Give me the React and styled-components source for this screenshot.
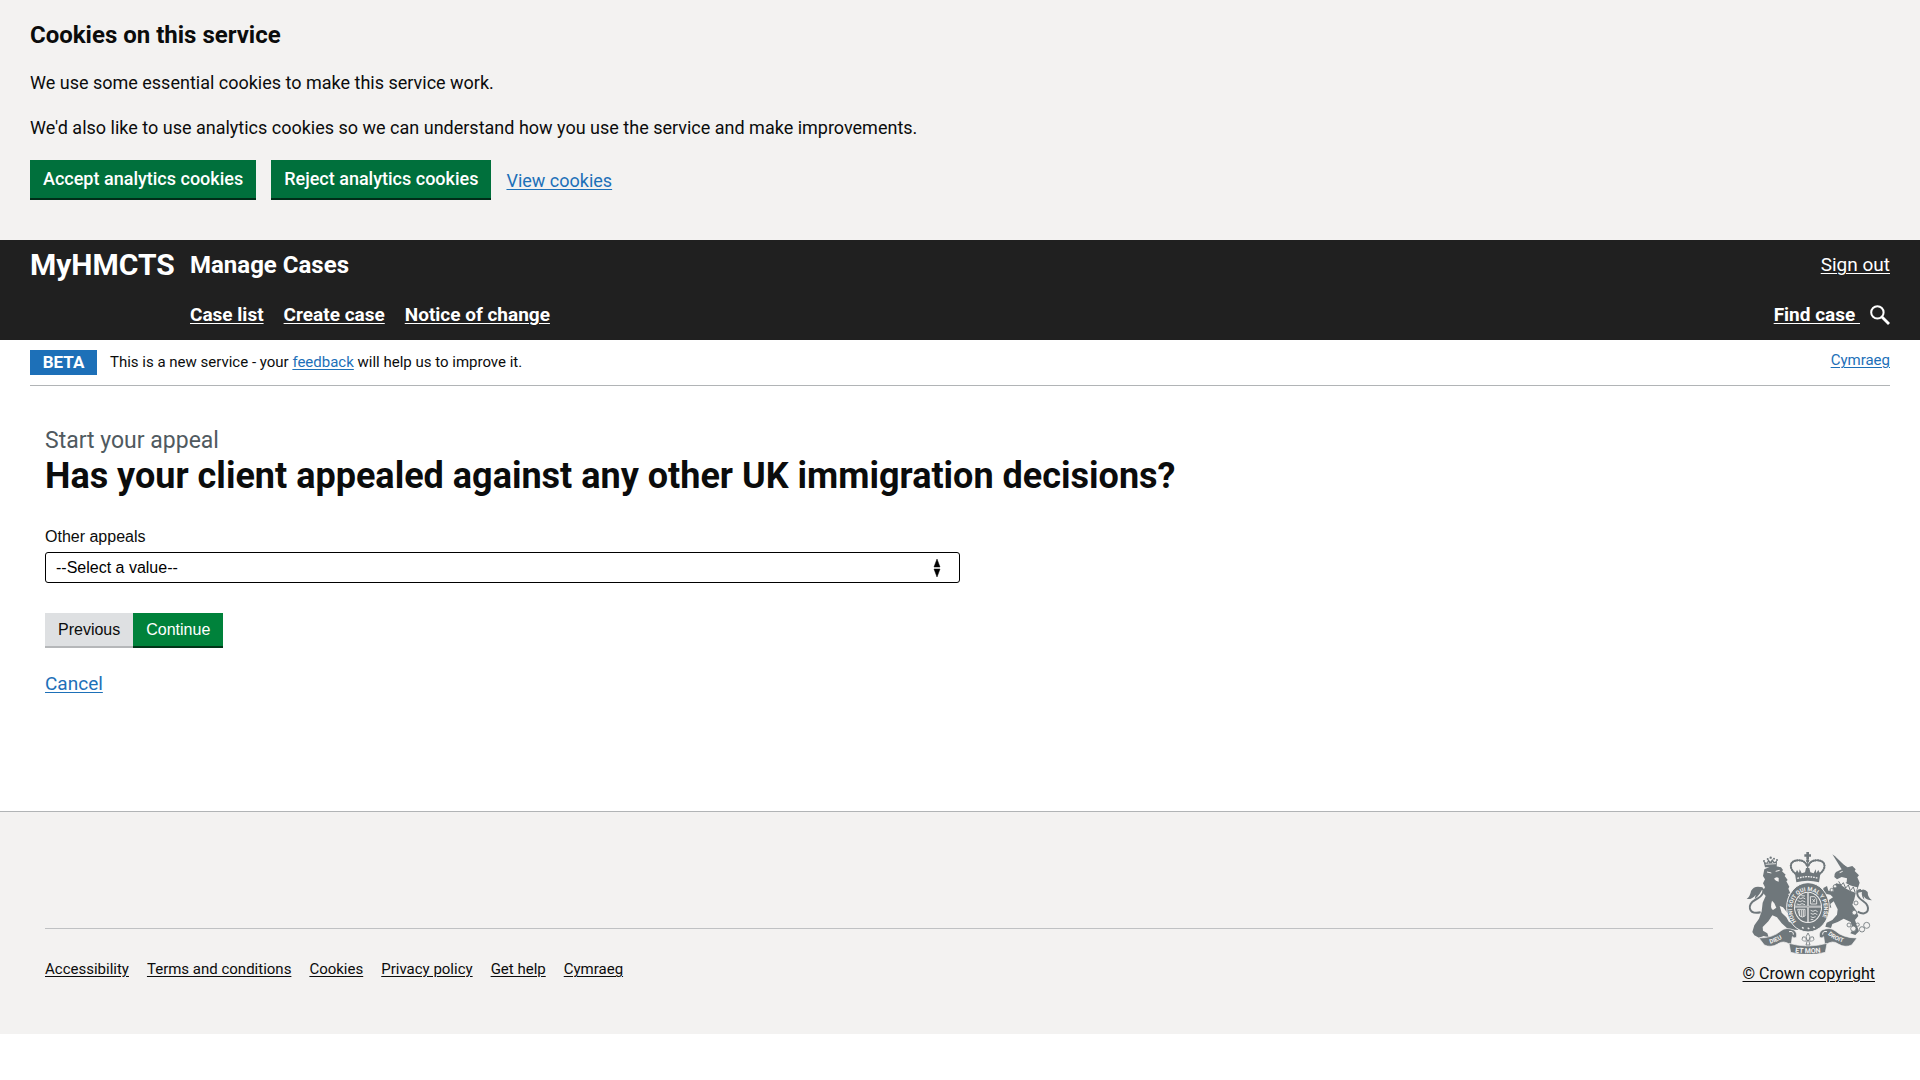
import React from "react";
import styled, { createGlobalStyle } from "styled-components";

const serviceFont = `Roboto, "Liberation Sans", sans-serif`;
const formFont = `"Liberation Sans", Arial, sans-serif`;

const colour = {
  text: "#0b0c0c",
  link: "#1d70b8",
  grey: "#f3f2f1",
  border: "#b1b4b6",
  header: "#202020",
  green: "#00703c",
  white: "#ffffff",
};

const GlobalStyle = createGlobalStyle`
  *, *::before, *::after { box-sizing: border-box; }
  body {
    margin: 0;
    background: ${colour.white};
    color: ${colour.text};
    font-family: ${serviceFont};
    font-size: 18px;
    line-height: 25px;
  }
  h1, h2, p, ul { margin: 0; padding: 0; }
  ul { list-style: none; }
`;

const Link = styled.a`
  color: ${(p) => p.$colour || colour.link};
  font-size: ${(p) => p.$size || 18}px;
  font-weight: ${(p) => (p.$bold ? 700 : 400)};
  text-decoration: underline;
  text-decoration-thickness: 1px;
  text-underline-offset: 2px;
`;

const CookieBanner = styled.section`
  display: flex;
  flex-direction: column;
  gap: 20px;
  padding: 20px 30px 40px;
  background: ${colour.grey};
`;

const BannerTitle = styled.h2`
  font-size: 24px;
  line-height: 30px;
  font-weight: 700;
`;

const BannerActions = styled.div`
  display: flex;
  align-items: center;
  gap: 15px;
`;

const BannerButton = styled.button`
  height: 40px;
  padding: 0 13px;
  border: 0;
  border-bottom: 2px solid #002d18;
  background: ${colour.green};
  color: ${colour.white};
  font: 500 18px/38px ${serviceFont};
`;

const Header = styled.header`
  display: grid;
  grid-template-columns: 160px 1fr auto;
  grid-template-rows: 50px 50px;
  align-items: center;
  padding: 0 30px;
  background: ${colour.header};
  color: ${colour.white};
`;

const Logo = styled.a`
  color: inherit;
  font-size: 30px;
  line-height: 24px;
  font-weight: 700;
  text-decoration: none;
`;

const ServiceName = styled.a`
  color: inherit;
  font-size: 24px;
  font-weight: 700;
  text-decoration: none;
`;

const MainNav = styled.nav`
  grid-column: 2;
  display: flex;
  gap: 20px;
  line-height: 24px;
`;

const HeaderEnd = styled.div`
  display: flex;
  align-items: center;
  justify-content: flex-end;
  gap: 10px;
  line-height: 24px;
`;

const PhaseBanner = styled.div`
  display: flex;
  align-items: flex-start;
  margin: 0 30px;
  padding: 10px 0;
  border-bottom: 1px solid ${colour.border};
`;

const PhaseTag = styled.strong`
  min-width: 67px;
  margin-right: 13px;
  background: ${colour.link};
  color: ${colour.white};
  font-size: 17px;
  font-weight: 700;
  text-align: center;
`;

const PhaseText = styled.p`
  flex: 1;
  font-size: 15px;
`;

const LanguageLink = styled(Link)`
  line-height: 20px;
`;

const Main = styled.main`
  padding: 40px 45px 115px;
`;

const Caption = styled.span`
  display: block;
  color: #505a5f;
  font-size: 23px;
  line-height: 30px;
  font-weight: 400;
`;

const PageTitle = styled.h1`
  font-size: 36px;
  line-height: 40px;
  font-weight: 700;
`;

const Form = styled.form`
  display: flex;
  flex-direction: column;
  align-items: flex-start;
  padding-top: 30px;
  font-family: ${formFont};
  font-size: 16px;
  line-height: 22px;
`;

const SelectFrame = styled.div`
  display: grid;
  align-items: center;
  width: 50%;
  margin: 4px 0 30px;

  & > * { grid-area: 1 / 1; }
`;

const Select = styled.select`
  width: 100%;
  height: 31px;
  padding: 0 10px;
  appearance: none;
  border: 1px solid #000;
  border-radius: 3px;
  background: ${colour.white};
  color: #000;
  font: 400 16px/20px ${formFont};
`;

const SelectArrows = styled.svg`
  justify-self: end;
  margin-right: 19px;
  pointer-events: none;
`;

const ButtonRow = styled.div`
  display: flex;
  margin-bottom: 23px;
`;

const FormButton = styled.button`
  height: 35px;
  padding: 0 13px;
  border: 0;
  border-bottom: 2px solid ${(p) => (p.$primary ? "#003618" : "#b5b7b9")};
  background: ${(p) => (p.$primary ? "#00823b" : "#dee0e2")};
  color: ${(p) => (p.$primary ? colour.white : colour.text)};
  font: 400 16px/33px ${formFont};
`;

const CancelLink = styled(Link)`
  font-family: ${serviceFont};
  line-height: 25px;
`;

const Footer = styled.footer`
  display: flex;
  gap: 30px;
  padding: 40px 45px 48px;
  border-top: 1px solid ${colour.border};
  background: ${colour.grey};
`;

const FooterMeta = styled.div`
  flex: 1;
  padding-top: 76px;
`;

const FooterLinks = styled.ul`
  display: flex;
  gap: 18px;
  padding-top: 26px;
  border-top: 1px solid #bfc1c3;
`;

const Crown = styled.a`
  display: flex;
  flex-direction: column;
  align-items: center;
  gap: 7px;
  color: ${colour.text};
  font-size: 16px;
  text-decoration: underline;
  text-decoration-thickness: 1px;
  text-underline-offset: 2px;
`;

function SearchIcon() {
  return (
    <svg width="20" height="20" viewBox="0 0 20 20" fill="none" stroke="#fff" aria-hidden="true">
      <circle cx="7.4" cy="7.4" r="6.2" strokeWidth="2" />
      <path d="M12 12l7 7" strokeWidth="2.8" />
    </svg>
  );
}

function CoatOfArms() {
  const ink = "#6f777b";
  const paper = colour.grey;
  return (
    <svg width="126" height="102" viewBox="80 66 376 306" fill={ink} fontFamily="Roboto, sans-serif" fontWeight="700" aria-hidden="true">
      {/* lion */}
      <path d="M136 112 L132 95 L141 98 L146 88 L152 95 L158 87 L164 96 L172 92 L171 112 Z" />
      <circle cx="133" cy="93" r="3" />
      <circle cx="144" cy="87" r="3" />
      <circle cx="153" cy="83" r="3.5" />
      <circle cx="163" cy="86" r="3" />
      <circle cx="172" cy="90" r="3" />
      <path d="M138 103 L169 101 M144 96 L148 100 M157 96 L161 99" stroke={paper} strokeWidth="2.5" />
      <path d="M134 118 Q158 104 184 112 L190 120 L187 124 L198 134 L195 138 L204 150 L200 154 L209 170 L206 176 L212 190 L205 192 L216 204 L216 236 L209 240 L220 262 L203 248 L190 232 L180 228 L186 248 L200 262 L208 276 L228 281 L239 291 L236 300 L206 298 L186 280 L172 262 L158 256 L146 274 L129 291 L130 302 L143 310 L147 322 L132 318 L118 323 L104 316 L98 306 L104 286 L118 266 L126 244 L129 218 L138 198 L128 186 L136 172 L130 160 L136 148 L130 138 Z" />
      <path d="M142 126 L155 129 M168 124 L180 121" stroke={paper} strokeWidth="3" />
      <path d="M163 146 Q170 138 177 144 L177 155 L169 152 Z" fill={paper} />
      <path d="M157 212 Q150 234 160 240 L170 233 L164 220 Z" fill={paper} />
      <path d="M123 247 C84 255 82 222 106 210 C134 196 138 176 122 174" fill="none" stroke={ink} strokeWidth="6" />
      <path d="M130 173 Q104 164 94 183 Q92 198 81 207 Q98 209 108 194 L105 207 Q120 196 130 173 Z" />

      {/* unicorn */}
      <path d="M338 73 L346 79 L379 110 L367 119 Z" />
      <path d="M345 132 L349 126 L366 118 L374 106 L384 112 L398 108 L408 118 L405 123 L418 136 L413 142 L420 158 L414 176 L408 190 L404 208 L398 224 L410 242 L416 258 L406 270 L412 288 L418 304 L407 315 L392 310 L400 298 L393 276 L372 266 L354 276 L338 282 L334 294 L317 290 L321 278 L338 270 L352 254 L354 238 L342 214 L332 222 L335 233 L322 231 L320 215 L340 202 L332 194 L311 190 L311 174 L322 168 L326 182 L342 184 L339 170 L350 160 L367 164 L381 157 L382 145 L366 141 L352 148 L344 141 Z" />
      <path d="M360 128 L369 124" stroke={paper} strokeWidth="3" />
      <path d="M357 158 Q382 182 408 188 L413 172 Q386 168 362 148 Z" fill={paper} />
      <path d="M357 154 L364 166 L371 158 L378 174 L386 165 L392 182 L401 171 L406 186" fill="none" stroke={ink} strokeWidth="3" />
      <g fill={paper} stroke={ink} strokeWidth="2.5">
        <circle cx="346" cy="169" r="5" />
        <circle cx="336" cy="180" r="5" />
        <circle cx="409" cy="219" r="6" />
        <circle cx="404" cy="248" r="7" />
        <circle cx="388" cy="285" r="6" />
        <circle cx="401" cy="296" r="8" />
        <circle cx="414" cy="284" r="5" />
        <circle cx="427" cy="298" r="8" />
        <circle cx="441" cy="286" r="9" />
      </g>
      <path d="M414 245 C446 263 457 230 430 213 C408 199 408 180 424 180" fill="none" stroke={ink} strokeWidth="6" />
      <path d="M412 188 Q432 170 444 186 Q444 202 457 211 Q439 211 432 198 L434 210 Q424 200 427 186 Z" />

      {/* royal crown */}
      <path d="M260 66 h8 v7 h6 v7 h-6 v8 h-8 v-8 h-6 v-7 h6 z" />
      <circle cx="264" cy="92" r="5" />
      <path d="M232 134 C206 118 208 92 234 91 C252 90 260 100 262 108 M296 134 C322 118 320 92 294 91 C276 90 268 100 266 108" fill="none" stroke={ink} strokeWidth="6.5" strokeLinecap="round" strokeDasharray="1 5.8" />
      <path d="M232 134 C206 118 208 92 234 91 C252 90 260 100 262 108 M296 134 C322 118 320 92 294 91 C276 90 268 100 266 108 M264 96 V134" fill="none" stroke={ink} strokeWidth="3.5" />
      <path d="M226 132 L232 120 L238 129 L240 118 L246 130 L256 127 L259 114 L269 114 L272 127 L282 130 L288 118 L290 129 L296 120 L302 132 L298 157 Q264 148 230 157 Z" />
      <path d="M233 145 Q264 135 295 145" fill="none" stroke={paper} strokeWidth="4" strokeDasharray="5 3" />

      {/* garter and quartered shield */}
      <ellipse cx="265" cy="232" rx="64" ry="74" stroke={paper} strokeWidth="3" />
      <path id="garter" fill="none" d="M231 275 A48 54 0 1 1 299 275" />
      <text fontSize="17" fill={paper}>
        <textPath href="#garter" startOffset="1">HONI SOIT QUI MAL Y PENSE</textPath>
      </text>
      <path d="M247 292 l5 3 M264 293 l5 4 M281 290 l4 4" stroke={paper} strokeWidth="4" />
      <ellipse cx="265" cy="232" rx="42" ry="47" fill={paper} />
      <ellipse cx="265" cy="232" rx="39" ry="44" />
      <path d="M265 186 V278 M224 230 H306" stroke={paper} strokeWidth="5" />
      <path d="M265 187 V277 M225 230 H305" stroke={ink} strokeWidth="1.5" />
      <g fill="none" stroke={paper} strokeWidth="2.5">
        <path d="M237 203 l6 3 l7 -3 l7 4 M234 212 l8 3 l6 -3 l9 4 M231 222 l9 2 l7 -3 l9 3 M245 197 l11 1" />
        <path d="M272 200 h13 l6 8 v14 h-18 z M278 208 l8 7 M286 207 l-7 10" />
        <path d="M234 238 h22 v20 q-8 6 -16 0 z M240 240 v18 M246 240 v20 M251 240 v19" />
        <path d="M273 241 l7 3 l7 -3 l7 4 M273 250 l7 3 l6 -3 l7 4 M273 260 l7 3 l8 -3 M273 268 l8 1" />
      </g>

      {/* motto scroll */}
      <g stroke={paper} strokeWidth="2">
        <path d="M118 324 Q160 324 184 302 Q200 290 222 300 Q234 307 230 322 Q224 326 218 320 L214 346 Q192 328 174 342 Q154 354 134 345 Z" />
        <path d="M412 324 Q370 324 346 302 Q330 290 308 300 Q296 307 300 322 Q306 326 312 320 L316 346 Q338 328 356 342 Q376 354 396 345 Z" />
        <path d="M208 340 Q265 356 322 340 L317 367 Q265 381 213 367 Z" />
      </g>
      <path d="M208 305 Q222 302 221 314 M322 305 Q308 302 309 314" fill="none" stroke={paper} strokeWidth="3" />
      <path id="mottoLeft" fill="none" d="M150 342 Q180 334 210 310" />
      <path id="mottoMiddle" fill="none" d="M225 367 Q265 373 316 366" />
      <path id="mottoRight" fill="none" d="M323 312 Q348 335 394 344" />
      <g fill={paper} fontSize="18">
        <text><textPath href="#mottoLeft" startOffset="2">DIEU</textPath></text>
        <text fontSize="21"><textPath href="#mottoMiddle" startOffset="1">ET MON</textPath></text>
        <text><textPath href="#mottoRight" startOffset="2">DROIT</textPath></text>
      </g>
      <g fill={paper} stroke={ink} strokeWidth="2.5">
        <path d="M265 309 Q255 320 262 331 H268 Q275 320 265 309 Z" />
        <path d="M260 330 Q258 318 249 321 Q244 329 252 334 M270 330 Q272 318 281 321 Q286 329 278 334 M254 333 H276 M262 335 L259 345 H271 L268 335" />
      </g>
    </svg>
  );
}

const navItems = ["Case list", "Create case", "Notice of change"];
const footerItems = ["Accessibility", "Terms and conditions", "Cookies", "Privacy policy", "Get help", "Cymraeg"];

export default function App() {
  return (
    <>
      <GlobalStyle />
      <CookieBanner aria-label="Cookies on this service">
        <BannerTitle>Cookies on this service</BannerTitle>
        <p>We use some essential cookies to make this service work.</p>
        <p>We'd also like to use analytics cookies so we can understand how you use the service and make improvements.</p>
        <BannerActions>
          <BannerButton type="button">Accept analytics cookies</BannerButton>
          <BannerButton type="button">Reject analytics cookies</BannerButton>
          <Link href="#cookies">View cookies</Link>
        </BannerActions>
      </CookieBanner>

      <Header>
        <Logo href="#home">MyHMCTS</Logo>
        <ServiceName href="#home">Manage Cases</ServiceName>
        <HeaderEnd>
          <Link href="#sign-out" $colour={colour.white} $size={19}>Sign out</Link>
        </HeaderEnd>
        <MainNav aria-label="Primary">
          {navItems.map((item) => (
            <Link key={item} href="#nav" $colour={colour.white} $size={19} $bold>{item}</Link>
          ))}
        </MainNav>
        <HeaderEnd>
          <Link href="#find" $colour={colour.white} $size={19} $bold>Find case&nbsp;</Link>
          <SearchIcon />
        </HeaderEnd>
      </Header>

      <PhaseBanner>
        <PhaseTag>BETA</PhaseTag>
        <PhaseText>
          This is a new service - your <Link href="#feedback" $size={15}>feedback</Link> will help us to improve it.
        </PhaseText>
        <LanguageLink href="#cymraeg" $size={15}>Cymraeg</LanguageLink>
      </PhaseBanner>

      <Main>
        <Caption>Start your appeal</Caption>
        <PageTitle>Has your client appealed against any other UK immigration decisions?</PageTitle>
        <Form onSubmit={(e) => e.preventDefault()}>
          <label htmlFor="otherAppeals">Other appeals</label>
          <SelectFrame>
            <Select id="otherAppeals" defaultValue="">
              <option value="">--Select a value--</option>
            </Select>
            <SelectArrows width="8" height="18" viewBox="0 0 8 18" aria-hidden="true">
              <path d="M4 0L7 8H1zM4 18L1 10H7z" stroke="#000" strokeWidth="0.5" />
            </SelectArrows>
          </SelectFrame>
          <ButtonRow>
            <FormButton type="button">Previous</FormButton>
            <FormButton type="submit" $primary>Continue</FormButton>
          </ButtonRow>
          <CancelLink href="#cancel" $size={19}>Cancel</CancelLink>
        </Form>
      </Main>

      <Footer>
        <FooterMeta>
          <FooterLinks>
            {footerItems.map((item) => (
              <li key={item}>
                <Link href="#footer" $colour={colour.text} $size={15}>{item}</Link>
              </li>
            ))}
          </FooterLinks>
        </FooterMeta>
        <Crown href="#copyright">
          <CoatOfArms />
          © Crown copyright
        </Crown>
      </Footer>
    </>
  );
}
